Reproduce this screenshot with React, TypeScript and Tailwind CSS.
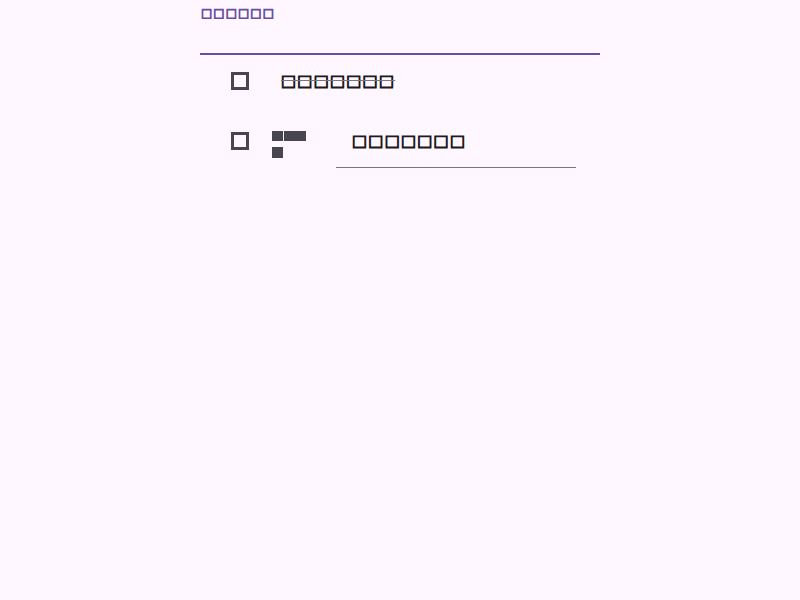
const label = "\u25A1\u25A1\u25A1\u25A1\u25A1\u25A1";
const done = "\u25A1\u25A1\u25A1\u25A1\u25A1\u25A1\u25A1";
const draft = "\u25A1\u25A1\u25A1\u25A1\u25A1\u25A1\u25A1";

function Box() {
  return <span className="block size-[18px] border-[3px] border-[#49454f]" />;
}

function DragIcon() {
  return (
    <svg width="34" height="27" viewBox="0 0 34 27" aria-hidden="true">
      <rect x="0" y="0" width="11" height="10" fill="#49454f" />
      <rect x="12" y="0" width="22" height="10" fill="#49454f" />
      <rect x="0" y="16" width="11" height="11" fill="#49454f" />
    </svg>
  );
}

export default function App() {
  return (
    <div className="min-h-screen bg-[#fef7ff] font-['DejaVu_Sans',sans-serif] [-webkit-text-stroke:0.9px_currentColor]">
      <div className="mx-auto w-[400px]">
        <div className="h-[55px] border-b-2 border-[#6750a4] pl-[1px]">
          <span className="text-[12px] leading-6 tracking-[1px] text-[#6750a4]">{label}</span>
        </div>

        <div className="flex h-[52px] items-center pl-[31px]">
          <Box />
          <span className="ml-[32px] text-[16px] tracking-[1.2px] text-[#1d1b20] line-through decoration-[#79747e]">
            {done}
          </span>
        </div>

        <div className="flex h-[68px] items-center pl-[31px]">
          <Box />
          <span className="ml-[23px] pt-[6px]">
            <DragIcon />
          </span>
          <div className="ml-[30px] flex h-[54px] w-[240px] items-center border-b border-[#79747e] pl-[16px]">
            <span className="text-[16px] tracking-[1.2px] text-[#1d1b20]">{draft}</span>
          </div>
        </div>
      </div>
    </div>
  );
}
